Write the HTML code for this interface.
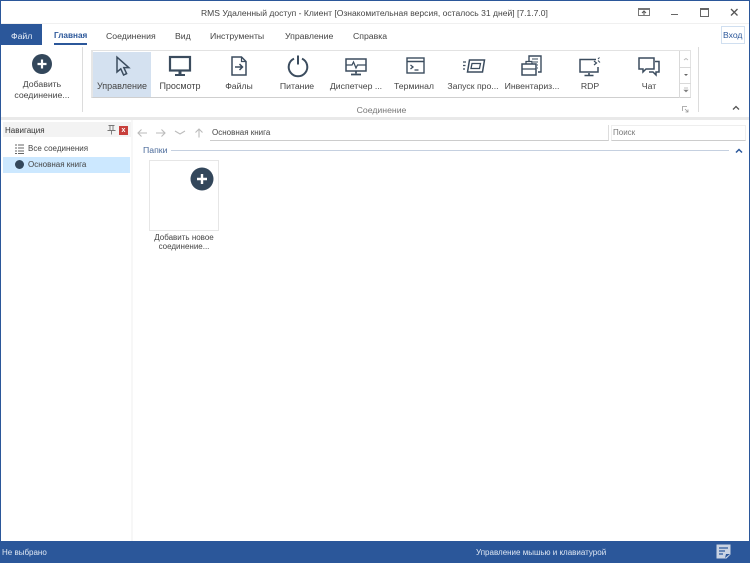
<!DOCTYPE html>
<html><head><meta charset="utf-8">
<style>
html,body{margin:0;padding:0;width:750px;height:563px;overflow:hidden;background:#fff}
body{position:relative;font-family:"Liberation Sans",sans-serif;font-size:8.7px;color:#444}
.a{position:absolute}
.t{position:absolute;white-space:nowrap;line-height:12px}
.c{text-align:center}
.s{font-size:8px}
svg{position:absolute;overflow:visible}
.ic{fill:none;stroke:#3b4c5e;stroke-width:1.5}
#w{position:absolute;left:0;top:0;width:750px;height:563px;filter:blur(.25px)}
</style></head><body><div id="w">
<!-- window border -->
<div class="a" style="left:0;top:0;width:750px;height:1px;background:#2b579a"></div>
<div class="a" style="left:0;top:0;width:1px;height:563px;background:#2b579a"></div>
<div class="a" style="right:0;top:0;width:1px;height:563px;background:#2b579a"></div>
<!-- title -->
<div class="t" style="left:201px;top:7px;font-size:8.55px;color:#444">RMS Удаленный доступ - Клиент [Ознакомительная версия, осталось 31 дней] [7.1.7.0]</div>
<div class="a" style="left:1px;top:23px;width:748px;height:1px;background:#f0f0f0"></div>
<svg style="left:638px;top:8px" width="12" height="10"><rect x=".5" y=".5" width="11" height="7" fill="none" stroke="#777"/><path d="M1 1.500h10" stroke="#777"/><path d="M6 7V3M4 5l2-2 2 2" fill="none" stroke="#555"/></svg>
<div class="a" style="left:671px;top:14px;width:7px;height:1px;background:#666"></div>
<div class="a" style="left:700px;top:8px;width:7px;height:6px;border:1px solid #666;border-top-width:2px"></div>
<svg style="left:730px;top:8px" width="10" height="10"><path d="M1 1l6.500 6.500M7.500 1L1 7.500" stroke="#555" stroke-width="1.300"/></svg>
<!-- tabs -->
<div class="a" style="left:0;top:24px;width:42px;height:21px;background:#2b579a"></div>
<div class="t" style="left:11px;top:30px;color:#e8eef7">Файл</div>
<div class="t" style="left:54px;top:30px;color:#2b579a;font-weight:bold;font-size:8.2px">Главная</div>
<div class="a" style="left:54px;top:43px;width:33px;height:2px;background:#2b579a"></div>
<div class="t" style="left:106px;top:30px">Соединения</div>
<div class="t" style="left:175px;top:30px">Вид</div>
<div class="t" style="left:210px;top:30px">Инструменты</div>
<div class="t" style="left:285px;top:30px">Управление</div>
<div class="t" style="left:353px;top:30px">Справка</div>
<div class="a" style="left:721px;top:26px;width:22px;height:16px;border:1px solid #d0dff0;"></div>
<div class="t" style="left:723px;top:29px;color:#2b579a;font-size:8.6px">Вход</div>
<!-- ribbon -->
<svg style="left:32px;top:54px" width="20" height="20"><circle cx="10" cy="10" r="10" fill="#33475b"/><path d="M10 5.500v9M5.500 10h9" stroke="#fff" stroke-width="2.200"/></svg>
<div class="t c" style="left:10px;width:64px;top:78px;">Добавить</div>
<div class="t c" style="left:10px;width:64px;top:89px;">соединение...</div>
<div class="a" style="left:82px;top:47px;width:1px;height:65px;background:#dcdcdc"></div>
<div class="a" style="left:91px;top:50px;width:600px;height:48px;border:1px solid #e2e2e2;border-left:2px solid #e6e6e6;border-bottom:1px solid #cfcfcf;box-sizing:border-box"></div>
<div class="a" style="left:93px;top:52px;width:58px;height:45px;background:#d4e1f0"></div>
<div class="a" style="left:679px;top:51px;width:1px;height:47px;background:#d9d9d9"></div>
<div class="a" style="left:680px;top:67px;width:11px;height:1px;background:#d9d9d9"></div>
<div class="a" style="left:680px;top:83px;width:11px;height:1px;background:#d9d9d9"></div>
<svg style="left:682px;top:55px" width="8" height="40"><path d="M2 5l2-1.500L6 5" fill="none" stroke="#bbb"/><path d="M2 19h4l-2 2z" fill="#666"/><path d="M2 33h4M2 35h4l-2 2z" fill="#777" stroke="#888" stroke-width=".6"/></svg>
<div class="a" style="left:698px;top:47px;width:1px;height:65px;background:#dcdcdc"></div>
<!-- icons -->
<svg class="ic" style="left:115px;top:56px" width="16" height="21"><path d="M2 1.200V16l3.800-3.200L8.600 19l3-1.400-2.800-6h5z" stroke-width="1.500"/></svg>
<svg class="ic" style="left:169px;top:56px" width="22" height="20"><rect x="1" y="1" width="20" height="13.500" stroke-width="2.200"/><path d="M11 15v3" stroke-width="3"/><path d="M6 19h10" stroke-width="2"/></svg>
<svg class="ic" style="left:231px;top:56px" width="16" height="20"><path d="M1 1h9.500L15 5.500V19H1z" stroke-width="1.500"/><path d="M10.500 1v4.500H15" stroke-width="1.200"/><path d="M4 11h7M8.500 8l3 3-3 3" stroke-width="1.500"/></svg>
<svg class="ic" style="left:287px;top:55px" width="22" height="22"><path d="M7 3.600a9.300 9.300 0 1 0 8 0" stroke-width="2"/><path d="M11 0.500v9" stroke-width="2"/></svg>
<svg class="ic" style="left:345px;top:58px" width="22" height="18"><rect x="1" y="1" width="20" height="12" stroke-width="1.500"/><path d="M1 7h6l1.500-3 2.500 6 1.500-3h8" stroke-width="1.200"/><path d="M11 13v2.500M6 16.500h10" stroke-width="1.700"/></svg>
<svg class="ic" style="left:406px;top:57px" width="19" height="18"><rect x="1" y="1" width="17" height="15" stroke-width="1.400"/><path d="M1 4.500h17" stroke-width="1.400"/><path d="M4.500 8l2.500 2-2.500 2" stroke-width="1.300"/><path d="M8.500 13h4" stroke-width="1.300"/></svg>
<svg class="ic" style="left:463px;top:59px" width="22" height="15"><path d="M6.500 1h15L19.500 13H4.500z" stroke-width="1.500"/><path d="M9 4.500h8.500l-1 5H8z" stroke-width="1.300"/><path d="M0 3h3M0 6.500h2.500M0 10h2" stroke-width="1.200"/></svg>
<svg class="ic" style="left:521px;top:55px" width="21" height="21"><path d="M8 6V1h12v16h-3" stroke-width="1.400"/><path d="M11 4h6M12 7h5M16 10h1M16 13h1" stroke-width="1.100"/><rect x="1" y="9" width="14" height="11" stroke-width="1.500"/><path d="M5 9V6.500h6V9M1 14h14" stroke-width="1.300"/></svg>
<svg class="ic" style="left:579px;top:56px" width="22" height="21"><path d="M17 3.500H1V16h18v-5" stroke-width="1.500"/><path d="M10 17v2M5.500 19.500h9" stroke-width="1.600"/><path d="M15 5l2.500 2-2.500 2" stroke-width="1.200"/><path d="M20.500 1.500L19 3M19 4.500l2 2" stroke-width="1"/></svg>
<svg class="ic" style="left:638px;top:57px" width="22" height="20"><path d="M1 1h15v11H8l-3 3v-3H1z" stroke-width="1.500"/><path d="M17 4.500h4V15h-3v3l-3-3h-4" stroke-width="1.500"/></svg>
<!-- ribbon labels -->
<div class="t c" style="left:93px;width:58px;top:80px;font-size:9px">Управление</div>
<div class="t c" style="left:151px;width:58px;top:80px;font-size:9px">Просмотр</div>
<div class="t c" style="left:210px;width:58px;top:80px">Файлы</div>
<div class="t c" style="left:268px;width:58px;top:80px">Питание</div>
<div class="t c" style="left:326px;width:60px;top:80px">Диспетчер ...</div>
<div class="t c" style="left:385px;width:58px;top:80px">Терминал</div>
<div class="t c" style="left:443px;width:60px;top:80px">Запуск про...</div>
<div class="t c" style="left:502px;width:60px;top:80px">Инвентариз...</div>
<div class="t c" style="left:561px;width:58px;top:80px">RDP</div>
<div class="t c" style="left:620px;width:58px;top:80px">Чат</div>
<div class="t c" style="left:91px;width:581px;top:104px;color:#777">Соединение</div>
<svg style="left:682px;top:106px" width="7" height="7"><path d="M.5 5V.5H5M3 3l3 3M6 3.500V6H3.500" fill="none" stroke="#999" stroke-width=".8"/></svg>
<svg style="left:732px;top:105px" width="8" height="6"><path d="M1 4.500L4 1.500l3 3" fill="none" stroke="#555" stroke-width="1.300"/></svg>
<div class="a" style="left:1px;top:117px;width:748px;height:3px;background:#e9e9e9"></div>
<!-- navigation -->
<div class="a" style="left:131px;top:120px;width:2px;height:421px;background:#f7f7f7"></div>
<div class="a" style="left:3px;top:122px;width:128px;height:15px;background:#f3f3f3"></div>
<div class="t s" style="left:5px;top:125px;color:#333">Навигация</div>
<svg style="left:107px;top:125px" width="9" height="10"><path d="M1.500.5h6M3 1v4M6 1v4M.5 5.500h8M4.500 6v3.500" fill="none" stroke="#777" stroke-width=".9"/></svg>
<div class="a" style="left:119px;top:126px;width:9px;height:9px;background:#c8403c;color:#fff;font-size:7px;line-height:9px;text-align:center;font-weight:bold">x</div>
<svg style="left:15px;top:144px" width="10" height="10"><path d="M0 1h2M3 1h6M0 4h2M3 4h6M0 7h2M3 7h6M0 9.500h2M3 9.500h6" stroke="#666" stroke-width="1.100"/></svg>
<div class="t s" style="left:28px;top:143px;">Все соединения</div>
<div class="a" style="left:3px;top:157px;width:127px;height:16px;background:#cce8ff"></div>
<div class="a" style="left:15px;top:160px;width:9px;height:9px;border-radius:50%;background:#33475b"></div>
<div class="t s" style="left:28px;top:159px;">Основная книга</div>
<!-- toolbar -->
<svg style="left:137px;top:128px" width="70" height="10"><path d="M1 5h9M4.500 1.500L1 5l3.500 3.500M19 5h9M24.500 1.500L28 5l-3.500 3.500M38 3l5 3 5-3" fill="none" stroke="#bbb" stroke-width="1.100"/><path d="M62 9.500V1M58.500 4.500L62 1l3.500 3.500" fill="none" stroke="#bbb" stroke-width="1.100"/></svg>
<div class="a" style="left:210px;top:125px;width:399px;height:16px;border-bottom:1px solid #ccc;border-right:1px solid #ddd;box-sizing:border-box"></div>
<div class="t s" style="left:212px;top:127px;">Основная книга</div>
<div class="a" style="left:611px;top:125px;width:135px;height:16px;border:1px solid #eee;border-bottom:1px solid #ccc;box-sizing:border-box"></div>
<div class="t s" style="left:613px;top:127px;color:#777">Поиск</div>
<!-- folders -->
<div class="t" style="left:143px;top:144px;color:#4a6a9a">Папки</div>
<div class="a" style="left:171px;top:150px;width:558px;height:1px;background:#c5d0e0"></div>
<svg style="left:735px;top:148px" width="8" height="6"><path d="M1 4.500L4 1.500l3 3" fill="none" stroke="#2b579a" stroke-width="1.500"/></svg>
<div class="a" style="left:149px;top:160px;width:70px;height:71px;border:1px solid #e6e6e6;box-sizing:border-box"></div>
<svg style="left:190px;top:167px" width="24" height="24"><circle cx="12" cy="12" r="11.500" fill="#33475b"/><path d="M12 7v10M7 12h10" stroke="#fff" stroke-width="2.400"/></svg>
<div class="t c s" style="left:140px;width:88px;top:232px">Добавить новое</div>
<div class="t c s" style="left:140px;width:88px;top:241px">соединение...</div>
<!-- status -->
<div class="a" style="left:0;top:541px;width:750px;height:22px;background:#2b579a"></div>
<div class="t s" style="left:2px;top:547px;color:#dfe7f3">Не выбрано</div>
<div class="t s" style="left:476px;top:547px;color:#dfe7f3">Управление мышью и клавиатурой</div>
<svg style="left:716px;top:544px" width="15" height="15"><path d="M.5.500h14v10l-4 4H.5z" fill="#c9d3e3"/><path d="M3 4h9M3 7h6M3 10h4" stroke="#2b579a" stroke-width="1.200"/><path d="M9 14l1-4h4z" fill="#2b579a"/></svg>
</div></body></html>
